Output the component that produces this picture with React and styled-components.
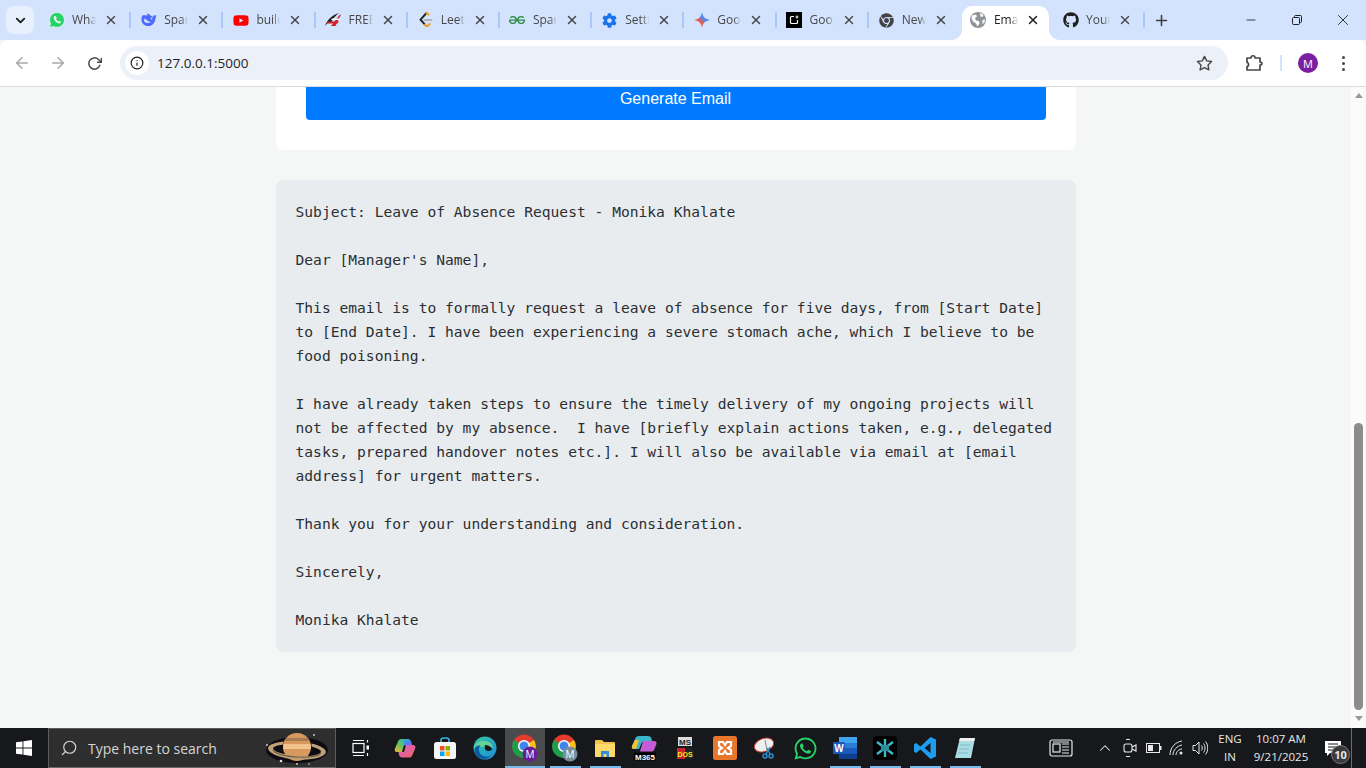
import styled, { createGlobalStyle } from "styled-components"
import { FaWhatsapp, FaYoutube, FaGithub, FaChrome, FaCog } from "react-icons/fa"
import { FiArrowLeft, FiArrowRight, FiRotateCw, FiStar, FiInfo, FiMinus, FiX, FiPlus, FiChevronDown, FiChevronUp, FiSearch } from "react-icons/fi"
import { SiGeeksforgeeks } from "react-icons/si"

const GlobalStyle = createGlobalStyle`
  html, body { margin: 0; padding: 0; height: 100%; overflow: hidden; }
  body { font-family: "Open Sans", "Liberation Sans", sans-serif; }
  * { box-sizing: border-box; }
`

const Shell = styled.div`
  width: 1366px;
  height: 768px;
  display: flex;
  flex-direction: column;
  background: #f4f7f6;
`

const TabStrip = styled.div`
  height: 40px;
  background: #d3e3fd;
  display: flex;
  align-items: flex-start;
  padding: 6px 0 0 6px;
`

const TabSearch = styled.button`
  width: 28px;
  height: 28px;
  border: 0;
  border-radius: 8px;
  background: #e9f0fd;
  color: #1f1f1f;
  display: flex;
  align-items: center;
  justify-content: center;
  padding: 0;
  margin-right: 4px;
`

const Tab = styled.div`
  width: 92.2px;
  height: 34px;
  display: flex;
  align-items: center;
  padding: 0 0 6px 10.5px;
  position: relative;
  color: ${(p) => (p.$active ? "#1f1f1f" : "#474747")};
  &::after {
    content: "";
    display: ${(p) => (p.$noSep ? "none" : "block")};
    position: absolute;
    right: -1px;
    top: 6px;
    width: 2px;
    height: 16px;
    background: #a8c7fa;
  }
`

// white shape behind the selected tab, flares out into the toolbar
const ActiveShape = styled.span`
  position: absolute;
  left: 2px;
  right: 3px;
  top: 0;
  bottom: 0;
  background: #fff;
  border-radius: 10px 10px 0 0;
  &::before,
  &::after {
    content: "";
    position: absolute;
    bottom: 0;
    width: 10px;
    height: 10px;
  }
  &::before {
    left: -10px;
    background: radial-gradient(circle at 0 0, transparent 9.5px, #fff 10px);
  }
  &::after {
    right: -10px;
    background: radial-gradient(circle at 100% 0, transparent 9.5px, #fff 10px);
  }
`

const Favicon = styled.span`
  width: 16px;
  height: 16px;
  flex: none;
  display: flex;
  align-items: center;
  justify-content: center;
  position: relative;
  color: ${(p) => p.$color || "inherit"};
`

const TabTitle = styled.span`
  width: 24px;
  margin-left: 7.5px;
  font-size: 12px;
  line-height: 16px;
  white-space: nowrap;
  overflow: hidden;
  position: relative;
  -webkit-mask-image: linear-gradient(to right, #000 70%, transparent 100%);
  mask-image: linear-gradient(to right, #000 70%, transparent 100%);
`

const TabClose = styled.span`
  margin-left: 7px;
  width: 16px;
  height: 16px;
  display: flex;
  align-items: center;
  justify-content: center;
  position: relative;
  color: inherit;
`

const NewTab = styled.span`
  margin-left: 8px;
  width: 18px;
  height: 28px;
  display: flex;
  align-items: center;
  justify-content: center;
  color: #3c3c3c;
`

const WindowControls = styled.div`
  margin-left: auto;
  margin-top: -6px;
  display: flex;
`

const WindowButton = styled.span`
  width: 46px;
  height: 40px;
  display: flex;
  align-items: center;
  justify-content: center;
  color: #1f1f1f;
`

const Toolbar = styled.div`
  height: 47px;
  background: #fff;
  border-radius: 8px 8px 0 0;
  border-bottom: 1px solid #d9dcdf;
  display: flex;
  align-items: center;
  padding: 0 0 0 12px;
  color: #474747;
`

const NavIcon = styled.span`
  width: 20px;
  height: 20px;
  margin-right: 16px;
  display: flex;
  align-items: center;
  justify-content: center;
  color: ${(p) => (p.$off ? "#a6a8ab" : "#474747")};
`

const Omnibox = styled.div`
  width: 1108px;
  height: 34px;
  border-radius: 17px;
  background: #ecf1f9;
  display: flex;
  align-items: center;
  padding: 0 15px 0 5px;
  font-size: 13.5px;
  color: #1f1f1f;
`

const SiteInfo = styled.span`
  width: 24px;
  height: 24px;
  border-radius: 50%;
  background: #fff;
  display: flex;
  align-items: center;
  justify-content: center;
  margin-right: 8px;
`

const OmniStar = styled.span`
  margin-left: auto;
  display: flex;
  color: #474747;
`

const ToolbarRight = styled.div`
  margin-left: 17px;
  display: flex;
  align-items: center;
`

const ToolbarDivider = styled.span`
  width: 2px;
  height: 16px;
  background: #d3e3fd;
  margin: 0 16px 0 17px;
`

const Avatar = styled.span`
  width: 20px;
  height: 20px;
  border-radius: 50%;
  background: #7b1fa2;
  color: #fff;
  font-size: 11px;
  display: flex;
  align-items: center;
  justify-content: center;
`

const Dots = styled.span`
  margin-left: 24px;
  display: flex;
  flex-direction: column;
  gap: 3px;
  span {
    width: 3px;
    height: 3px;
    border-radius: 50%;
    background: #474747;
  }
`

const Viewport = styled.div`
  flex: 1;
  min-height: 0;
  display: flex;
  overflow: hidden;
`

const Page = styled.main`
  flex: 1;
  display: flex;
  flex-direction: column;
  align-items: center;
  overflow: hidden;
`

const FormCard = styled.section`
  width: 800px;
  height: 63px;
  background: #fff;
  border-radius: 0 0 8px 8px;
  padding: 0 30px;
`

const GenerateButton = styled.button`
  display: block;
  width: 100%;
  height: 33px;
  border: 0;
  padding: 0 0 10px;
  border-radius: 0 0 4px 4px;
  background: #007bff;
  color: #fff;
  font-family: "Liberation Sans", Arial, sans-serif;
  font-size: 16px;
`

const Output = styled.pre`
  width: 800px;
  margin: 30px 0 0;
  padding: 20px;
  height: 472px;
  background: #e9ecef;
  border-radius: 8px;
  font-family: "DejaVu Sans Mono", monospace;
  font-size: 14.62px;
  line-height: 24px;
  color: #2b2f33;
  white-space: pre-wrap;
`

const Scrollbar = styled.div`
  width: 15px;
  background: #fbfbfb;
  display: flex;
  flex-direction: column;
  align-items: center;
  justify-content: space-between;
  padding: 6px 0 7px;
  position: relative;
`

const Arrow = styled.span`
  width: 0;
  height: 0;
  border-left: 4.5px solid transparent;
  border-right: 4.5px solid transparent;
  ${(p) => (p.$down ? "border-top: 5px solid #999;" : "border-bottom: 5px solid #999;")}
`

const Thumb = styled.span`
  position: absolute;
  left: 3px;
  right: 3px;
  top: 336px;
  height: 287px;
  background: #8c8c8c;
  border-radius: 5px;
`

const Taskbar = styled.footer`
  height: 40px;
  background: #16181b;
  display: flex;
  align-items: stretch;
  color: #fff;
`

const StartButton = styled.span`
  width: 48px;
  display: flex;
  align-items: center;
  justify-content: center;
`

const SearchBox = styled.div`
  width: 288px;
  background: #2e2e2e;
  border: 1px solid #5c5c5c;
  border-bottom-color: #6a6a6a;
  display: flex;
  align-items: center;
  padding-left: 11px;
  font-size: 14px;
  color: #d6d6d6;
  position: relative;
  svg:first-child { transform: scaleX(-1); }
`

const SearchLabel = styled.span`
  margin-left: 10px;
`

const PlanetArt = styled.span`
  position: absolute;
  right: 6px;
  top: 3px;
  display: flex;
`

const TaskIcon = styled.span`
  width: ${(p) => p.$w || 40}px;
  display: flex;
  align-items: center;
  justify-content: center;
  position: relative;
  background: ${(p) => (p.$active ? "#4a4b4d" : "transparent")};
  &::after {
    content: "";
    display: ${(p) => (p.$open ? "block" : "none")};
    position: absolute;
    bottom: 0;
    left: ${(p) => (p.$active ? 0 : 5)}px;
    right: ${(p) => (p.$active ? 0 : 4)}px;
    height: 2px;
    background: #76b9ed;
  }
`

const Tray = styled.div`
  margin-left: auto;
  display: flex;
  align-items: center;
  font-size: 11.5px;
  color: #e8e8e8;
  padding-right: 14px;
`

const TrayIcon = styled.span`
  width: ${(p) => p.$w || 24}px;
  margin-right: ${(p) => p.$mr || 0}px;
  display: flex;
  align-items: center;
  justify-content: center;
`

const TrayText = styled.div`
  width: ${(p) => p.$w}px;
  text-align: center;
  line-height: 18px;
`

const Notice = styled.span`
  width: 38px;
  height: 40px;
  display: flex;
  align-items: center;
  justify-content: center;
  position: relative;
  border-right: 1px solid #6c6c6c;
`

const NoticeBadge = styled.span`
  position: absolute;
  right: 1px;
  bottom: 4px;
  width: 19px;
  height: 19px;
  border-radius: 50%;
  background: #3a3a3a;
  border: 1px solid #777;
  font-size: 11px;
  font-weight: 700;
  display: flex;
  align-items: center;
  justify-content: center;
`

// favicons and app icons that the icon packs don't carry
const WhatsappFav = () => (
  <svg width="16" height="16" viewBox="0 0 16 16">
    <path d="M8 .5a7.400 7.400 0 0 1 0 14.800c-1.300 0-2.500-.3-3.500-.9L.5 15.500l1.100-3.900A7.400 7.400 0 0 1 8 .5z" fill="#25d366" stroke="#fff" strokeWidth=".6" />
    <path d="M5.300 4.300c-1 1-.8 2.600.5 4.300 1.500 2 3.400 3.100 4.900 2.700.7-.2 1.200-.8 1.200-1.500L10.300 8.700l-.8.900c-.9-.3-2-1.300-2.500-2.500l.7-.8-.8-2z" fill="#fff" />
  </svg>
)

const Whale = () => (
  <svg width="16" height="16" viewBox="0 0 16 16">
    <path d="M15.500 3.200c-.5-.2-.7.3-1 .5-.4-.4-1-.5-1.500-.4-.6.4-1 1-1 1.700-1.400-.3-3.800-3.300-5.700-3.500-.6 0-.2 1 .4 1.800C5 3.600 3 3 1.800 3.300 1 3.600.2 5.500.5 8.500c.4 3 3 5.500 6.500 5.500 3.700 0 6.200-2.300 7-5.300.6-2 .6-3.700 1.500-5.500z" fill="#4d6bfe" />
    <path d="M4 6.500c1.800 1.500 3.500 3.400 6 3.600-1.500 1.300-5 1.400-6.600-.6C2.800 8.500 3 7 4 6.500z" fill="#d3e3fd" />
    <circle cx="10.500" cy="6.500" r=".9" fill="#d3e3fd" />
  </svg>
)

const RedWing = () => (
  <svg width="16" height="16" viewBox="0 0 16 16">
    <path d="M0 14C2 8 7 3 14 1c-4 3-6 6-7.500 9H3.500z" fill="#222" />
    <path d="M6 14 14.500 3 16 2.500 10.500 14z" fill="#d32027" />
    <path d="M3 9.500h11l-1.500 2H1.500z" fill="#d32027" />
    <path d="M7 6.500h8l-1 1.500H6z" fill="#fff" />
  </svg>
)

const LeetFav = () => (
  <svg width="16" height="16" viewBox="0 0 16 16" fill="none" strokeWidth="1.900" strokeLinecap="round">
    <path d="M9.500 1 3.500 7.700l4.500 5" stroke="#222" />
    <path d="M9.500 1l2 1.600M8 12.700l1.200 1.300h1.500l2-2" stroke="#f59e1b" />
    <path d="M7.500 8h7" stroke="#b3b3b3" />
  </svg>
)

const Spark = () => (
  <svg width="16" height="16" viewBox="0 0 16 16">
    <defs>
      <linearGradient id="sparkFill" x1="0" y1="1" x2="1" y2="0">
        <stop offset="0" stopColor="#f6bd2c" />
        <stop offset=".4" stopColor="#e8594f" />
        <stop offset=".6" stopColor="#4c8df6" />
        <stop offset="1" stopColor="#2f6fe4" />
      </linearGradient>
    </defs>
    <path d="M8 0c.6 4.500 3 7.200 8 8-5 .8-7.400 3.500-8 8-.6-4.500-3-7.200-8-8 5-.8 7.400-3.500 8-8z" fill="url(#sparkFill)" />
  </svg>
)

const BlackSquare = () => (
  <svg width="16" height="16" viewBox="0 0 16 16">
    <rect width="16" height="16" fill="#000" />
    <path d="M8 4.500H5.500a1 1 0 0 0-1 1v5a1 1 0 0 0 1 1h5a1 1 0 0 0 1-1V8" fill="none" stroke="#fff" strokeWidth="1.200" />
    <path d="M11 2.800l.6 1.600 1.600.6-1.600.6-.6 1.600-.6-1.600-1.600-.6 1.600-.6z" fill="#fff" />
  </svg>
)

const Globe = () => (
  <svg width="16" height="16" viewBox="0 0 16 16">
    <circle cx="8" cy="8" r="8" fill="#8f9499" />
    <path d="M2 3.500 6 2.500l1 2-2 1.500 1 2.500 3 .5.500 2.500-2 3-1.500-3-3-2L1.500 6zM10 1l3.500 2-1 2-2-.5zM12.500 8l2.500-.5-.5 3-2 1.500z" fill="#fff" />
  </svg>
)

const Planet = () => (
  <svg width="64" height="34" viewBox="0 0 64 34">
    <ellipse cx="32" cy="18" rx="31" ry="13" fill="#0d0c12" />
    <circle cx="32" cy="15" r="14" fill="#d89a5c" />
    <path d="M18.500 12h27l.5 5H18z" fill="#f0c48c" />
    <path d="M21 6h22l2 3H19z" fill="#a87a55" />
    <g transform="rotate(-4 32 18)">
      <path d="M3 18c0-3 6-6 15-7.500l-.2 3C11 15 8 16.500 8 18c0 3 10 6 24 6s24-3 24-6c0-1.500-3-3-9.800-4.500l-.2-3C55 12 61 15 61 18c0 5-13 9.500-29 9.500S3 23 3 18z" fill="#bfa078" />
      <path d="M8 20c3 3 12 5 24 5s21-2 24-5" fill="none" stroke="#6e5a43" strokeWidth="1" />
    </g>
    <circle cx="15" cy="3" r=".9" fill="#ddd" />
    <circle cx="62" cy="13" r=".9" fill="#ddd" />
    <circle cx="48" cy="29" r="1.300" fill="#ddd" />
    <circle cx="20" cy="32" r=".8" fill="#ddd" />
    <circle cx="32" cy="32" r=".9" fill="#ddd" />
  </svg>
)

const WinLogo = () => (
  <svg width="16" height="16" viewBox="0 0 16 16">
    <path d="M0 2.300 6.500 1.400v6.200H0zM7.400 1.300 16 0v7.600H7.400zM0 8.400h6.500v6.200L0 13.700zM7.400 8.400H16V16l-8.600-1.300z" fill="#fff" />
  </svg>
)

const TaskView = () => (
  <svg width="18" height="18" viewBox="0 0 18 18" fill="none" stroke="#fff" strokeWidth="1.200">
    <path d="M1 1.500h11M1 16.500h11" />
    <rect x="1" y="4.500" width="11" height="9" />
    <path d="M15.500 1v2.500M15.500 14v3" />
    <rect x="14.500" y="6.500" width="2.500" height="4" fill="#fff" stroke="none" />
  </svg>
)

const Copilot = () => (
  <svg width="22" height="22" viewBox="0 0 22 22">
    <defs>
      <linearGradient id="copA" x1="0" y1="0" x2="1" y2="1">
        <stop offset="0" stopColor="#2aa5e8" />
        <stop offset="1" stopColor="#7a5cf0" />
      </linearGradient>
      <linearGradient id="copB" x1="0" y1="1" x2="1" y2="0">
        <stop offset="0" stopColor="#f7b52b" />
        <stop offset=".5" stopColor="#4fc36b" />
        <stop offset="1" stopColor="#2aa5e8" />
      </linearGradient>
      <linearGradient id="copC" x1="0" y1="0" x2="1" y2="1">
        <stop offset="0" stopColor="#d65fd8" />
        <stop offset="1" stopColor="#f0665a" />
      </linearGradient>
    </defs>
    <path d="M7 2h7c1.500 0 2.500 1 3 2.500L18 8h-8L8 15H3c-2 0-2.800-1.500-2-3.500l3-7C4.700 3 5.500 2 7 2z" fill="url(#copB)" />
    <path d="M10 3h4c1.500 0 2.500 1 3 2.500l1 3H10z" fill="url(#copA)" />
    <path d="M12 8h7c2 0 3 1.500 2.200 3.500l-3 7C17.500 20 16.500 20.500 15 20.500H8c-1.500 0-2.500-1-3-2.500l-.5-3H10z" fill="url(#copC)" />
  </svg>
)

const Store = () => (
  <svg width="24" height="24" viewBox="0 0 24 24">
    <path d="M8 7V4.500C8 3 9 2 10.500 2h3C15 2 16 3 16 4.500V7" fill="none" stroke="#35b5ea" strokeWidth="1.600" />
    <rect x="1" y="6" width="22" height="17" rx="2.500" fill="#f5f5f5" />
    <rect x="7" y="10" width="4.500" height="4.500" fill="#f25022" />
    <rect x="12.500" y="10" width="4.500" height="4.500" fill="#7fba00" />
    <rect x="7" y="15.500" width="4.500" height="4.500" fill="#00a4ef" />
    <rect x="12.500" y="15.500" width="4.500" height="4.500" fill="#ffb900" />
  </svg>
)

const Edge = () => (
  <svg width="24" height="24" viewBox="0 0 24 24">
    <defs>
      <linearGradient id="edgeA" x1="0" y1="0" x2="1" y2="1">
        <stop offset="0" stopColor="#36c5a0" />
        <stop offset="1" stopColor="#1e8fe0" />
      </linearGradient>
    </defs>
    <circle cx="12" cy="12" r="11.500" fill="url(#edgeA)" />
    <path d="M1 12C2 6.500 7 4.500 12 5c4.500.5 7.500 3 7.500 6.500 0 2-2 3-4 3-2.500 0-3.500-1-3.500-2.500C8 10 3.500 10 1 12z" fill="#7ee08a" opacity=".7" />
    <path d="M1.500 14c0-3 3-5 6-4.500-2 2-2.500 6 .5 9 2.500 2.500 7 3 10.500.5-2 2.500-4.500 4-7.500 4C6 23 1.500 19 1.500 14z" fill="#0c59a4" />
    <path d="M12 9c3 0 5.500 1.500 7 3.500.5 1.500-1.500 2.500-3.500 2.500-1.700 0-3-.7-3.500-2-.3-1.200-.5-2.500 0-4z" fill="#16181b" />
  </svg>
)

const ChromeBadged = ({ badge, tint }) => (
  <svg width="26" height="28" viewBox="0 0 26 28">
    <circle cx="12" cy="12" r="11.500" fill="#e33b2e" />
    <path d="M12 12 22 6a11.500 11.500 0 0 1-6 17z" fill="#fbc116" />
    <path d="M12 12 16 23A11.500 11.500 0 0 1 2 6z" fill="#1e9e4a" />
    <circle cx="12" cy="12" r="6" fill="#fff" />
    <circle cx="12" cy="12" r="4.500" fill="#3f83ee" />
    <circle cx="18" cy="20" r="7.500" fill={tint} />
    <text x="18" y="23.500" fontSize="10" fill="#fff" textAnchor="middle" fontFamily="Open Sans, sans-serif">{badge}</text>
  </svg>
)

const Folder = () => (
  <svg width="22" height="20" viewBox="0 0 22 20">
    <path d="M1 3a1 1 0 0 1 1-1h6l2 2h10a1 1 0 0 1 1 1v13a1 1 0 0 1-1 1H2a1 1 0 0 1-1-1z" fill="#f1c14b" />
    <path d="M1 6h20v12a1 1 0 0 1-1 1H2a1 1 0 0 1-1-1z" fill="#fcd96a" />
    <path d="M7 19v-6h8v6h-2.500v-3h-3v3z" fill="#2c8fd9" />
  </svg>
)

const M365 = () => (
  <svg width="28" height="26" viewBox="0 0 28 26">
    <path d="M8 1h9c2 0 3 1 3.500 2.500L21 7H11L8 14H3c-2 0-2.500-1-2-3l3-7C4.500 2 6 1 8 1z" fill="#3bb6c9" />
    <path d="M1 11 4 5h4l-3 9H3c-2 0-2.500-1-2-3z" fill="#f2c230" />
    <path d="M12 6h11c2 0 3 1.500 2.300 3.500L23 15c-.5 1-1.500 1.500-3 1.500H9z" fill="#c65bd6" />
    <rect x="3" y="17.500" width="22" height="8" fill="#000" />
    <text x="14" y="24.500" fontSize="8" fontWeight="700" fill="#fff" textAnchor="middle" fontFamily="Liberation Sans, sans-serif">M365</text>
  </svg>
)

const OldDos = () => (
  <svg width="18" height="24" viewBox="0 0 18 24">
    <rect x="2" y="1" width="14" height="9" fill="#ddd" />
    <text x="9" y="9" fontSize="8" fontWeight="700" fill="#222" textAnchor="middle" fontFamily="Liberation Sans, sans-serif">MS</text>
    <rect x="1" y="12" width="16" height="11" fill="#222" />
    <rect x="1" y="12" width="8" height="11" fill="#c9242c" />
    <text x="9" y="20.500" fontSize="7" fontWeight="700" fill="#f3e81c" textAnchor="middle" fontFamily="Liberation Sans, sans-serif">DOS</text>
  </svg>
)

const Xampp = () => (
  <svg width="24" height="24" viewBox="0 0 24 24">
    <rect width="24" height="24" rx="2.500" fill="#e8772e" />
    <path d="M6 6h4l2 3 2-3h4v4l-3 2 3 2v4h-4l-2-3-2 3H6v-4l3-2-3-2z" fill="none" stroke="#fff" strokeWidth="2.200" />
  </svg>
)

const Snip = () => (
  <svg width="24" height="24" viewBox="0 0 24 24">
    <ellipse cx="11" cy="9" rx="10" ry="6.500" fill="#eee" stroke="#c0392b" transform="rotate(-20 11 9)" />
    <path d="M12 4l2 10" stroke="#888" strokeWidth="1" />
    <path d="M14 12l3 6M17 11l-4 7" stroke="#2b8fd9" strokeWidth="1.500" />
    <circle cx="12" cy="20" r="2" fill="none" stroke="#2b8fd9" strokeWidth="1.500" />
    <circle cx="18" cy="20" r="2" fill="none" stroke="#2b8fd9" strokeWidth="1.500" />
  </svg>
)

const Word = () => (
  <svg width="24" height="22" viewBox="0 0 24 22">
    <rect x="6" y="0" width="18" height="22" rx="1" fill="#2b7cd3" />
    <rect x="6" y="0" width="18" height="6" fill="#41a5ee" />
    <rect x="6" y="11" width="18" height="5.500" fill="#185abd" />
    <rect x="6" y="16.500" width="18" height="5.500" fill="#103f91" />
    <rect x="0" y="5" width="12" height="12" rx="1" fill="#185abd" />
    <text x="6" y="14.500" fontSize="10" fontWeight="700" fill="#fff" textAnchor="middle" fontFamily="Liberation Sans, sans-serif">W</text>
  </svg>
)

const DarkApp = () => (
  <svg width="24" height="24" viewBox="0 0 24 24">
    <rect width="24" height="24" rx="4" fill="#000" />
    <path d="M12 3v18M4 6l16 12M20 6 4 18" stroke="#3fb8c9" strokeWidth="2.400" />
    <path d="M8 9h8v6H8z" fill="#2b8fa0" />
  </svg>
)

const VsCode = () => (
  <svg width="24" height="24" viewBox="0 0 24 24">
    <path d="M17.500 1 23 3.500v17L17.500 23 7.500 13.500 3 17l-2-1.200V8.200L3 7l4.500 3.500zM17.500 7l-6 5 6 5z" fill="#1f9cf0" />
  </svg>
)

const Notepad = () => (
  <svg width="24" height="24" viewBox="0 0 24 24">
    <path d="M7 2h15l-4 20H2z" fill="#a9dce3" />
    <path d="M7 2h15l-.8 3H6z" fill="#eee" />
    <path d="M7 9h10M6 13h10M5 17h10" stroke="#7cbcc6" />
  </svg>
)

const NewsIcon = () => (
  <svg width="24" height="18" viewBox="0 0 24 18" fill="none" stroke="#e8e8e8" strokeWidth="1.200">
    <rect x="1" y="1" width="22" height="16" rx="2" />
    <rect x="4" y="5" width="7" height="8" />
    <path d="M13 5h7M13 8h7M13 11h7M13 14h7M4 3h16" />
  </svg>
)

const MeetIcon = () => (
  <svg width="16" height="20" viewBox="0 0 16 20" fill="none" stroke="#e8e8e8" strokeWidth="1.100">
    <rect x="2" y="6" width="8" height="8" rx="2" />
    <path d="M10 9l4-2v6l-4-2M4 1.500h4M4 18.500h4" />
  </svg>
)

const Battery = () => (
  <svg width="16" height="10" viewBox="0 0 16 10">
    <rect x=".5" y=".5" width="13" height="9" fill="none" stroke="#e8e8e8" />
    <rect x="2" y="2" width="5" height="6" fill="#e8e8e8" />
    <rect x="14" y="3" width="1.500" height="4" fill="#e8e8e8" />
  </svg>
)

const Wifi = () => (
  <svg width="16" height="16" viewBox="0 0 16 16" fill="none" stroke="#e8e8e8" strokeWidth="1">
    <path d="M1 15C1 8 6 2 13 1M4 15c0-5 4-9 9-10M7 15c0-3 3-6 6-6" />
    <circle cx="12" cy="13" r="1.500" fill="#e8e8e8" stroke="none" />
  </svg>
)

const Speaker = () => (
  <svg width="16" height="16" viewBox="0 0 16 16" fill="none" stroke="#e8e8e8" strokeWidth="1">
    <path d="M1 5.500h2.500L7 2v12l-3.500-3.500H1z" />
    <path d="M9.500 5.500c1 1.500 1 3.500 0 5M11.500 3.500c2 2.500 2 6.500 0 9M13.500 1.500c3 3.500 3 9.500 0 13" />
  </svg>
)

const NoticeGlyph = () => (
  <svg width="16" height="15" viewBox="0 0 16 15">
    <path d="M0 0h16v12H5l-3 3v-3H0z" fill="#fff" />
    <path d="M3 3h10M3 6h10M3 9h7" stroke="#16181b" />
  </svg>
)

const Restore = () => (
  <svg width="10" height="10" viewBox="0 0 10 10" fill="none" stroke="currentColor">
    <rect x=".5" y="2.500" width="7" height="7" rx="1" />
    <path d="M2.500 2.500V1.500a1 1 0 0 1 1-1h5a1 1 0 0 1 1 1v5a1 1 0 0 1-1 1h-1" />
  </svg>
)

const Puzzle = () => (
  <svg width="18" height="18" viewBox="0 0 18 18" fill="none" stroke="#474747" strokeWidth="1.700">
    <path d="M2 4h4c0-3 4-3 4 0h5v4c2.500 0 2.500 3 0 3v5H2v-3.500c2 0 2-4 0-4z" strokeLinejoin="round" />
  </svg>
)

const tabs = [
  { title: "WhatsApp", icon: <WhatsappFav /> },
  { title: "Spark", icon: <Whale /> },
  { title: "build", icon: <FaYoutube size={17} />, color: "#f00" },
  { title: "FREE", icon: <RedWing /> },
  { title: "LeetCode", icon: <LeetFav /> },
  { title: "Spark", icon: <SiGeeksforgeeks size={16} />, color: "#2f8d46" },
  { title: "Settings", icon: <FaCog size={15} />, color: "#1a73e8" },
  { title: "Google", icon: <Spark /> },
  { title: "Google", icon: <BlackSquare /> },
  { title: "New Tab", icon: <FaChrome size={15} />, color: "#444" },
  { title: "Email", icon: <Globe />, active: true },
  { title: "Your", icon: <FaGithub size={16} />, color: "#1f1f1f" },
]

const body = `Subject: Leave of Absence Request - Monika Khalate

Dear [Manager's Name],

This email is to formally request a leave of absence for five days, from [Start Date] to [End Date]. I have been experiencing a severe stomach ache, which I believe to be food poisoning.

I have already taken steps to ensure the timely delivery of my ongoing projects will not be affected by my absence.  I have [briefly explain actions taken, e.g., delegated tasks, prepared handover notes etc.]. I will also be available via email at [email address] for urgent matters.

Thank you for your understanding and consideration.

Sincerely,

Monika Khalate`

const App = () => {
  return (
    <Shell>
      <GlobalStyle />
      <TabStrip>
        <TabSearch>
          <FiChevronDown size={15} strokeWidth={3} />
        </TabSearch>
        {tabs.map((t, i) => (
          <Tab key={i} $active={t.active} $noSep={t.active || i === 9}>
            {t.active && <ActiveShape />}
            <Favicon $color={t.color}>{t.icon}</Favicon>
            <TabTitle>{t.title}</TabTitle>
            <TabClose>
              <FiX size={14} strokeWidth={2.5} />
            </TabClose>
          </Tab>
        ))}
        <NewTab>
          <FiPlus size={17} strokeWidth={2.2} />
        </NewTab>
        <WindowControls>
          <WindowButton>
            <FiMinus size={14} strokeWidth={1.4} />
          </WindowButton>
          <WindowButton>
            <Restore />
          </WindowButton>
          <WindowButton>
            <FiX size={18} strokeWidth={1.2} />
          </WindowButton>
        </WindowControls>
      </TabStrip>
      <Toolbar>
        <NavIcon $off>
          <FiArrowLeft size={18} />
        </NavIcon>
        <NavIcon $off>
          <FiArrowRight size={18} />
        </NavIcon>
        <NavIcon>
          <FiRotateCw size={15} strokeWidth={2.4} />
        </NavIcon>
        <Omnibox>
          <SiteInfo>
            <FiInfo size={14} strokeWidth={2} />
          </SiteInfo>
          127.0.0.1:5000
          <OmniStar>
            <FiStar size={17} strokeWidth={2} />
          </OmniStar>
        </Omnibox>
        <ToolbarRight>
          <Puzzle />
          <ToolbarDivider />
          <Avatar>M</Avatar>
          <Dots>
            <span />
            <span />
            <span />
          </Dots>
        </ToolbarRight>
      </Toolbar>
      <Viewport>
        <Page>
          <FormCard>
            <GenerateButton>Generate Email</GenerateButton>
          </FormCard>
          <Output>{body}</Output>
        </Page>
        <Scrollbar>
          <Arrow />
          <Thumb />
          <Arrow $down />
        </Scrollbar>
      </Viewport>
      <Taskbar>
        <StartButton>
          <WinLogo />
        </StartButton>
        <SearchBox>
          <FiSearch size={18} strokeWidth={1.5} />
          <SearchLabel>Type here to search</SearchLabel>
          <PlanetArt>
            <Planet />
          </PlanetArt>
        </SearchBox>
        <TaskIcon $w={49}><TaskView /></TaskIcon>
        <TaskIcon><Copilot /></TaskIcon>
        <TaskIcon><Store /></TaskIcon>
        <TaskIcon><Edge /></TaskIcon>
        <TaskIcon $active $open><ChromeBadged badge="M" tint="#6a1b9a" /></TaskIcon>
        <TaskIcon $open><ChromeBadged badge="M" tint="#78909c" /></TaskIcon>
        <TaskIcon $open><Folder /></TaskIcon>
        <TaskIcon><M365 /></TaskIcon>
        <TaskIcon><OldDos /></TaskIcon>
        <TaskIcon><Xampp /></TaskIcon>
        <TaskIcon><Snip /></TaskIcon>
        <TaskIcon><FaWhatsapp size={25} color="#25d366" /></TaskIcon>
        <TaskIcon $open><Word /></TaskIcon>
        <TaskIcon $open><DarkApp /></TaskIcon>
        <TaskIcon $open><VsCode /></TaskIcon>
        <TaskIcon $open><Notepad /></TaskIcon>
        <Tray>
          <TrayIcon $w={32} $mr={16}><NewsIcon /></TrayIcon>
          <TrayIcon $w={24}><FiChevronUp size={18} strokeWidth={1.4} /></TrayIcon>
          <TrayIcon $w={25}><MeetIcon /></TrayIcon>
          <TrayIcon $w={24}><Battery /></TrayIcon>
          <TrayIcon $w={22}><Wifi /></TrayIcon>
          <TrayIcon $w={24}><Speaker /></TrayIcon>
          <TrayText $w={36}>ENG<br />IN</TrayText>
          <TrayText $w={66}>10:07 AM<br />9/21/2025</TrayText>
          <Notice>
            <NoticeGlyph />
            <NoticeBadge>10</NoticeBadge>
          </Notice>
        </Tray>
      </Taskbar>
    </Shell>
  )
}

export default App
